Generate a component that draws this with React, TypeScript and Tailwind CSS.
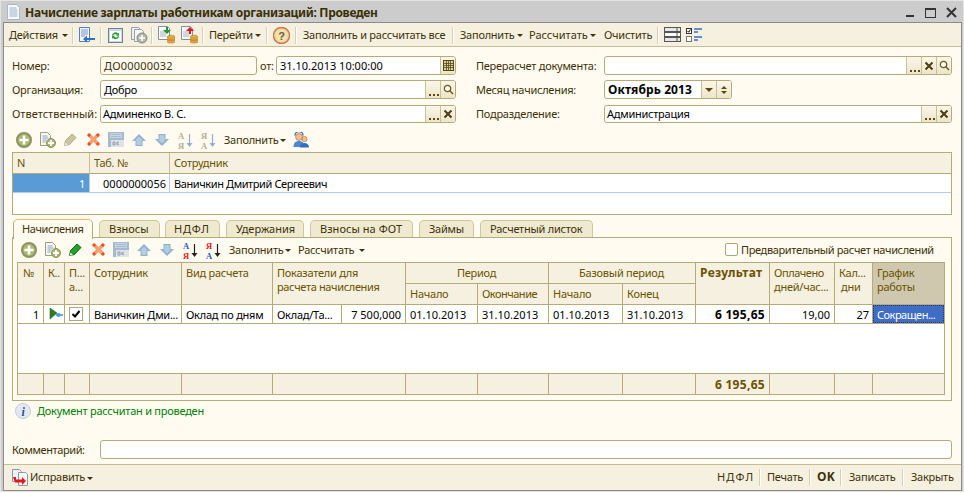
import React from "react";

const FONT = "font-['Liberation_Sans',sans-serif] text-[11px] leading-[13px] tracking-[-0.25px] text-[#3d3208]";
const HEAD = "text-[#6b5200]";
const NUM = "tracking-[0px] text-black";
const BOLD = "font-bold text-[12px] tracking-[0.3px]";

function T({ c, children }: { c: string; children: React.ReactNode }) {
  return <div className={"absolute whitespace-nowrap " + c}>{children}</div>;
}
function Box({ c, children }: { c: string; children?: React.ReactNode }) {
  return <div className={"absolute " + c}>{children}</div>;
}
function Caret({ c }: { c: string }) {
  return <div className={"absolute w-0 h-0 border-l-[3px] border-r-[3px] border-t-[3px] border-l-transparent border-r-transparent border-t-[#3d3208] " + c} />;
}
function Sep({ c }: { c: string }) {
  return <div className={"absolute w-[2px] border-l border-l-[#d8d0ae] border-r border-r-white " + c} />;
}
function Ellipsis() {
  return <div className="absolute left-[3px] bottom-[2px] flex gap-[2px]">
    <span className="w-[2px] h-[2px] bg-[#5a4a10]" /><span className="w-[2px] h-[2px] bg-[#5a4a10]" /><span className="w-[2px] h-[2px] bg-[#5a4a10]" />
  </div>;
}
function Btn({ c, children }: { c: string; children?: React.ReactNode }) {
  return <div className={"absolute top-0 bottom-0 w-[15px] border-l border-l-[#c9c09a] bg-gradient-to-b from-[#fbf7e8] to-[#ece5c9] flex items-center justify-center " + c}>{children}</div>;
}
function XI() {
  return <svg width="10" height="10" viewBox="0 0 10 10"><path d="M1.5 1.5l7 7M8.500 1.500l-7 7" stroke="#4a3c10" strokeWidth="2" /></svg>;
}
function Lens() {
  return <svg width="11" height="11" viewBox="0 0 11 11"><circle cx="4.500" cy="4.500" r="3.200" fill="#fff" stroke="#6a5a20" strokeWidth="1.200" /><path d="M7 7l3 3" stroke="#6a5a20" strokeWidth="1.600" /></svg>;
}

function Add({ c }: { c: string }) {
  return <svg className={"absolute " + c} width="16" height="16" viewBox="0 0 16 16"><circle cx="8" cy="8" r="7" fill="#a9bb72" stroke="#8f9260" strokeWidth="2" /><path d="M8 3.500v9M3.500 8h9" stroke="#fff" strokeWidth="2.600" /></svg>;
}
function AddDoc({ c }: { c: string }) {
  return <svg className={"absolute " + c} width="16" height="16" viewBox="0 0 16 16"><path d="M.5 .5h7l3 3v10H.5z" fill="#f8f8f0" stroke="#9a9a88" /><path d="M2.500 4h5M2.500 6h6M2.500 8h4M2.500 10h3" stroke="#8aa4c0" /><circle cx="11" cy="11" r="4.500" fill="#a9b672" stroke="#8f9260" /><path d="M11 8v6M8 11h6" stroke="#fff" strokeWidth="1.800" /></svg>;
}
function Pencil({ c, on }: { c: string; on?: boolean }) {
  return <svg className={"absolute " + c} width="13" height="13" viewBox="0 0 13 13"><path d="M.5 12.500L1.500 7.500 8 1l4 3.500-6.500 7z" fill={on ? "#25a02a" : "#c9c5a2"} stroke={on ? "#0d6a12" : "#b0ab86"} /><path d="M.5 12.500l1-3 2.500 2.500z" fill={on ? "#e8f5d8" : "#e8e6d8"} /></svg>;
}
function Del({ c }: { c: string }) {
  return <svg className={"absolute " + c} width="13" height="13" viewBox="0 0 13 13"><path d="M2 2l9 9M11 2l-9 9" stroke="#f5a070" strokeWidth="3.600" /><path d="M1 1l2 2M12 1l-2 2M1 12l2-2M12 12l-2-2" stroke="#ec4a28" strokeWidth="3" /></svg>;
}
function Save({ c }: { c: string }) {
  return <svg className={"absolute " + c} width="16" height="15" viewBox="0 0 16 15"><rect width="16" height="15" fill="#a3bacf" /><rect x="2" y="1" width="12" height="5" fill="#c6d5e2" /><path d="M3 2.500h10M3 4.500h10" stroke="#aabccc" /><rect x="3" y="8" width="13" height="7" fill="#dde3e6" /><path d="M5 10v3h2v-3zM9 10v3M9 11.500l2-1.500M9 11.500l2 1.500" stroke="#8ea0b0" fill="none" /></svg>;
}
function Up({ c }: { c: string }) {
  return <svg className={"absolute " + c} width="14" height="12" viewBox="0 0 14 12"><path d="M7 0l7 7h-3.500v5h-7V7H0z" fill="#8fb0d0" /><path d="M7 2.500L11 6.500H9.500v4.500h-5V6.500H3z" fill="#b4cce0" /></svg>;
}
function Down({ c }: { c: string }) {
  return <svg className={"absolute " + c} width="14" height="12" viewBox="0 0 14 12"><path d="M7 12L0 5h3.500V0h7v5H14z" fill="#8fb0d0" /><path d="M7 9.500L3 5.500h1.500V1h5v4.500H11z" fill="#b4cce0" /></svg>;
}
function Sort({ c, top, bottom, a, b, arrow }: { c: string; top: string; bottom: string; a: string; b: string; arrow: string }) {
  return <svg className={"absolute " + c} width="16" height="17" viewBox="0 0 16 17">
    <text x="0" y="6.500" fontSize="8.500" fontWeight="700" fontFamily="Liberation Serif, serif" fill={a}>{top}</text>
    <text x="0" y="16.500" fontSize="8.500" fontWeight="700" fontFamily="Liberation Serif, serif" fill={b}>{bottom}</text>
    <path d="M11.500 2v11" stroke={arrow} strokeWidth="1.200" /><path d="M8.500 11h6l-3 4z" fill={arrow} />
  </svg>;
}

export default function App() {
  return (
    <div className={"relative w-[964px] h-[493px] overflow-hidden bg-white " + FONT}>
      {/* window frame */}
      <Box c="left-0 top-0 w-[964px] h-[492px] bg-[#cccccc] border border-[#e4e4e4]" />
      <Box c="left-[3px] top-[22px] w-[959px] h-[469px] bg-[#fffbf0] border border-[#8a8a8a]" />

      {/* title */}
      <svg className="absolute left-[6px] top-[4px]" width="15" height="16" viewBox="0 0 15 16">
        <path d="M1.500 .5h9l3 3v12h-12z" fill="#f8fafc" stroke="#a8b8c8" />
        <path d="M3.500 4h7M3.500 6h8M3.500 8h8M3.500 10h8M3.500 12h8" stroke="#98b0d0" />
      </svg>
      <T c="left-[25px] top-[6px] font-bold text-[12px] tracking-[-0.32px] text-[#3a3000]">Начисление зарплаты работникам организаций: Проведен</T>
      <Box c="left-[906px] top-[15px] w-[8px] h-[2px] bg-[#333]" />
      <Box c="left-[925px] top-[8px] w-[11px] h-[10px] border border-[#333] border-t-2" />
      <svg className="absolute left-[946px] top-[7px]" width="11" height="11" viewBox="0 0 11 11"><path d="M1 1l9 9M10 1l-9 9" stroke="#333" strokeWidth="2" /></svg>

      {/* top toolbar */}
      <Box c="left-[4px] top-[23px] w-[957px] h-[24px] bg-[#f5f0df] border-b border-b-[#c6bd94]" />
      <T c="left-[9px] top-[28px]">Действия</T><Caret c="left-[62px] top-[34px]" />
      <Sep c="left-[72px] top-[27px] h-[17px]" />
      <svg className="absolute left-[78px] top-[27px]" width="18" height="17" viewBox="0 0 18 17"><path d="M1.500 .5h10v14h-10z" fill="#f4f7fb" stroke="#5580b8" /><path d="M3 3h7M3 5h7M3 7h7M3 9h4" stroke="#6f95c8" /><path d="M17 11H9V8.500L5 12l4 3.500V13h8z" fill="#2f6fc4" /></svg>
      <Sep c="left-[100px] top-[27px] h-[17px]" />
      <svg className="absolute left-[108px] top-[28px]" width="15" height="15" viewBox="0 0 15 15"><rect x=".5" y=".5" width="14" height="14" fill="#c8d8e4" stroke="#70808c" /><rect x="2" y="3" width="11" height="10" fill="#fff" /><path d="M4 7a3.500 3.500 0 016-1.500l1-.8v3H8l1-.8A2.400 2.400 0 005 8z" fill="#2f9a3a" /><path d="M11 8.500a3.500 3.500 0 01-6 1.500l-1 .8v-3h3l-1 .8a2.400 2.400 0 004-.6z" fill="#2f9a3a" /></svg>
      <svg className="absolute left-[131px] top-[27px]" width="17" height="17" viewBox="0 0 17 17"><path d="M.5 .5h7l2 2v10h-9z" fill="#eef0f2" stroke="#9aa0a6" /><path d="M3.500 2.500h7l2 2v10h-9z" fill="#f6f7f8" stroke="#9aa0a6" /><circle cx="11" cy="11" r="5" fill="#b4b8a8" stroke="#84887a" /><path d="M11 8v6M8 11h6" stroke="#fff" strokeWidth="1.600" /></svg>
      <Sep c="left-[151px] top-[27px] h-[17px]" />
      <svg className="absolute left-[158px] top-[26px]" width="18" height="18" viewBox="0 0 18 18"><path d="M.5 .5h9l2 2v11h-11z" fill="#f6f8fa" stroke="#8a9098" /><path d="M2 6h7M2 8h6M2 10h6" stroke="#a8b4c0" /><path d="M8 1v3H5l4 4 4-4h-3V1z" fill="#1d9a35" /><ellipse cx="13" cy="11" rx="4" ry="1.800" fill="#e8b04a" stroke="#a87828" strokeWidth=".6" /><path d="M9 11v5c0 1 2 1.600 4 1.600s4-.6 4-1.600v-5" fill="#dca040" /><path d="M9 13.500c1 1 7 1 8 0" stroke="#a87828" fill="none" strokeWidth=".6" /></svg>
      <svg className="absolute left-[181px] top-[26px]" width="18" height="18" viewBox="0 0 18 18"><path d="M.5 .5h9l2 2v11h-11z" fill="#f6f8fa" stroke="#8a9098" /><path d="M2 6h7M2 8h6M2 10h6" stroke="#a8b4c0" /><path d="M8 8V5H5l4-4 4 4h-3v3z" fill="#e01818" /><ellipse cx="13" cy="11" rx="4" ry="1.800" fill="#e8b04a" stroke="#a87828" strokeWidth=".6" /><path d="M9 11v5c0 1 2 1.600 4 1.600s4-.6 4-1.600v-5" fill="#dca040" /><path d="M9 13.500c1 1 7 1 8 0" stroke="#a87828" fill="none" strokeWidth=".6" /></svg>
      <Sep c="left-[202px] top-[27px] h-[17px]" />
      <T c="left-[209px] top-[28px]">Перейти</T><Caret c="left-[255px] top-[34px]" />
      <Sep c="left-[266px] top-[27px] h-[17px]" />
      <svg className="absolute left-[273px] top-[27px]" width="17" height="17" viewBox="0 0 17 17"><circle cx="8.500" cy="8.500" r="8" fill="#e8d8b8" stroke="#d07838" strokeWidth="1.400" /><circle cx="8.500" cy="8.500" r="5.500" fill="#f4e4a8" /><text x="8.500" y="12.500" textAnchor="middle" fontSize="11" fontWeight="700" fontFamily="Liberation Sans, sans-serif" fill="#6a5a40">?</text></svg>
      <Sep c="left-[295px] top-[27px] h-[17px]" />
      <T c="left-[303px] top-[28px]">Заполнить и рассчитать все</T>
      <Sep c="left-[452px] top-[27px] h-[17px]" />
      <T c="left-[460px] top-[28px]">Заполнить</T><Caret c="left-[517px] top-[34px]" />
      <T c="left-[529px] top-[28px] tracking-[0px]">Рассчитать</T><Caret c="left-[590px] top-[34px]" />
      <T c="left-[604px] top-[28px]">Очистить</T>
      <Sep c="left-[657px] top-[27px] h-[17px]" />
      <svg className="absolute left-[664px] top-[27px]" width="17" height="16" viewBox="0 0 17 16"><rect x=".5" y=".5" width="16" height="4" fill="#e8e8e8" stroke="#555" /><rect x=".5" y="5.500" width="16" height="4" fill="#fff" stroke="#555" /><rect x=".5" y="10.500" width="16" height="4" fill="#e8e8e8" stroke="#555" /><path d="M13 1v13" stroke="#555" /></svg>
      <svg className="absolute left-[686px] top-[27px]" width="18" height="16" viewBox="0 0 18 16"><rect x=".5" y="1.500" width="5" height="5" fill="#fff" stroke="#333" /><path d="M1.500 4l1.200 1.200L4.500 2.500" stroke="#000" fill="none" /><rect x=".5" y="9.500" width="5" height="5" fill="#fff" stroke="#777" /><path d="M8 2h8M8 5h4M8 10h8M8 13h4" stroke="#3a6cc8" strokeWidth="1.600" /></svg>

      {/* form left */}
      <T c="left-[12px] top-[59px]">Номер:</T>
      <Box c="left-[100px] top-[56px] w-[157px] h-[19px] rounded-[3px] border border-[#b5aa7a] bg-[#fffbf0]" />
      <T c="left-[104px] top-[59px] tracking-[0.2px]">ДО00000032</T>
      <T c="left-[260px] top-[59px]">от:</T>
      <Box c="left-[276px] top-[56px] w-[180px] h-[19px] rounded-[3px] border border-[#b5aa7a] bg-white overflow-hidden">
        <Btn c="right-0"><svg width="11" height="11" viewBox="0 0 11 11"><rect x=".5" y=".5" width="10" height="10" fill="#d8d0a8" stroke="#5a4a10" /><path d="M.5 3.500h10M.5 5.500h10M.5 7.500h10M3.500 1v10M5.500 1v10M7.500 1v10" stroke="#5a4a10" strokeWidth=".8" /></svg></Btn>
      </Box>
      <T c={"left-[280px] top-[59px] " + NUM}>31.10.2013 10:00:00</T>

      <T c="left-[12px] top-[83px]">Организация:</T>
      <Box c="left-[100px] top-[80px] w-[356px] h-[19px] rounded-[3px] border border-[#b5aa7a] bg-white overflow-hidden">
        <Btn c="right-[15px]"><Ellipsis /></Btn>
        <Btn c="right-0"><Lens /></Btn>
      </Box>
      <T c="left-[104px] top-[83px] text-black">Добро</T>

      <T c="left-[12px] top-[107px] tracking-[0px]">Ответственный:</T>
      <Box c="left-[100px] top-[105px] w-[356px] h-[18px] rounded-[3px] border border-[#b5aa7a] bg-white overflow-hidden">
        <Btn c="right-[15px]"><Ellipsis /></Btn>
        <Btn c="right-0"><XI /></Btn>
      </Box>
      <T c="left-[103px] top-[107px] text-black">Админенко В. С.</T>

      {/* form right */}
      <T c="left-[476px] top-[59px]">Перерасчет документа:</T>
      <Box c="left-[604px] top-[56px] w-[348px] h-[19px] rounded-[3px] border border-[#b5aa7a] bg-white overflow-hidden">
        <Btn c="right-[30px]"><Ellipsis /></Btn>
        <Btn c="right-[15px]"><XI /></Btn>
        <Btn c="right-0"><Lens /></Btn>
      </Box>
      <T c="left-[476px] top-[83px]">Месяц начисления:</T>
      <Box c="left-[604px] top-[80px] w-[128px] h-[19px] rounded-[3px] border border-[#b5aa7a] bg-white overflow-hidden">
        <Btn c="right-[15px]"><div className="w-0 h-0 border-l-[4px] border-r-[4px] border-t-[4px] border-l-transparent border-r-transparent border-t-[#5a4a10]" /></Btn>
        <Btn c="right-0"><div className="flex flex-col gap-[2px]"><div className="w-0 h-0 border-l-[3px] border-r-[3px] border-b-[3px] border-l-transparent border-r-transparent border-b-[#5a4a10]" /><div className="w-0 h-0 border-l-[3px] border-r-[3px] border-t-[3px] border-l-transparent border-r-transparent border-t-[#5a4a10]" /></div></Btn>
      </Box>
      <T c="left-[608px] top-[83px] text-black font-bold text-[12px] tracking-[0.1px]">Октябрь 2013</T>
      <T c="left-[476px] top-[107px]">Подразделение:</T>
      <Box c="left-[604px] top-[105px] w-[348px] h-[18px] rounded-[3px] border border-[#b5aa7a] bg-white overflow-hidden">
        <Btn c="right-[15px]"><Ellipsis /></Btn>
        <Btn c="right-0"><XI /></Btn>
      </Box>
      <T c="left-[607px] top-[107px] text-black">Администрация</T>

      {/* toolbar 1 */}
      <Add c="left-[16px] top-[132px]" />
      <AddDoc c="left-[40px] top-[132px]" />
      <Pencil c="left-[64px] top-[133px]" />
      <Del c="left-[87px] top-[133px]" />
      <Save c="left-[108px] top-[132px]" />
      <Up c="left-[132px] top-[134px]" />
      <Down c="left-[155px] top-[134px]" />
      <Sort c="left-[178px] top-[132px]" top="А" bottom="Я" a="#b4ae90" b="#b4ae90" arrow="#8fb0d0" />
      <Sort c="left-[201px] top-[132px]" top="Я" bottom="А" a="#b4ae90" b="#b4ae90" arrow="#8fb0d0" />
      <T c="left-[224px] top-[133px]">Заполнить</T><Caret c="left-[280px] top-[139px]" />
      <svg className="absolute left-[293px] top-[132px]" width="16" height="16" viewBox="0 0 16 16"><circle cx="6" cy="5" r="3.400" fill="#f0c090" stroke="#a06830" strokeWidth=".6" /><path d="M2 3.500a4 4 0 018 0" stroke="#3a6ab0" fill="none" strokeWidth="1.400" /><path d="M.5 15c0-4 2-6 5.500-6s5.500 2 5.500 6z" fill="#4a88d0" /><circle cx="11.500" cy="7" r="2.600" fill="#f0c090" stroke="#a06830" strokeWidth=".6" /><path d="M7 15.500c0-3 2-4.500 4.500-4.500S16 12.500 16 15.500z" fill="#2f6fc4" /></svg>

      {/* table 1 */}
      <Box c="left-[12px] top-[152px] w-[940px] h-[63px] border border-[#b5aa7a] bg-white" />
      <Box c="left-[13px] top-[153px] w-[938px] h-[21px] bg-[#f5f0df] border-b border-b-[#b5aa7a]" />
      <Box c="left-[89px] top-[153px] w-px h-[21px] bg-[#c6bd94]" />
      <Box c="left-[169px] top-[153px] w-px h-[21px] bg-[#c6bd94]" />
      <T c={"left-[17px] top-[156px] " + HEAD}>N</T>
      <T c={"left-[94px] top-[156px] " + HEAD}>Таб. №</T>
      <T c={"left-[174px] top-[156px] " + HEAD}>Сотрудник</T>
      <Box c="left-[13px] top-[174px] w-[76px] h-[18px] bg-[#5b9bd5]" />
      <Box c="left-[89px] top-[174px] w-px h-[18px] bg-[#b4cde6]" />
      <Box c="left-[169px] top-[174px] w-px h-[18px] bg-[#b4cde6]" />
      <Box c="left-[13px] top-[192px] w-[938px] h-px bg-[#b4cde6]" />
      <T c="left-[13px] top-[177px] w-[72px] text-right text-white">1</T>
      <T c={"left-[89px] top-[177px] w-[77px] text-right " + NUM}>0000000056</T>
      <T c="left-[174px] top-[177px] text-black tracking-[-0.4px]">Ваничкин Дмитрий Сергеевич</T>

      {/* tabs */}
      <Box c="left-[12px] top-[237px] w-[940px] h-[164px] border border-[#b5aa7a] bg-[#fffbf0]" />
      <Box c="left-[13px] top-[219px] w-[80px] h-[20px] rounded-t-[5px] border border-b-0 border-[#b5aa7a] border-t-[#e8c060] bg-[#fffbf0]" />
      <T c="left-[22px] top-[222px] tracking-[-0.4px]">Начисления</T>
      <Box c="left-[99px] top-[220px] w-[61px] h-[17px] rounded-t-[5px] border border-b-0 border-[#cfc69f] bg-[#efe9d0]" />
      <T c="left-[109px] top-[222px] tracking-[0px]">Взносы</T>
      <Box c="left-[165px] top-[220px] w-[55px] h-[17px] rounded-t-[5px] border border-b-0 border-[#cfc69f] bg-[#efe9d0]" />
      <T c="left-[174px] top-[222px] tracking-[0.8px]">НДФЛ</T>
      <Box c="left-[226px] top-[220px] w-[78px] h-[17px] rounded-t-[5px] border border-b-0 border-[#cfc69f] bg-[#efe9d0]" />
      <T c="left-[236px] top-[222px] tracking-[0px]">Удержания</T>
      <Box c="left-[310px] top-[220px] w-[103px] h-[17px] rounded-t-[5px] border border-b-0 border-[#cfc69f] bg-[#efe9d0]" />
      <T c="left-[320px] top-[222px] tracking-[0.05px]">Взносы на ФОТ</T>
      <Box c="left-[419px] top-[220px] w-[55px] h-[17px] rounded-t-[5px] border border-b-0 border-[#cfc69f] bg-[#efe9d0]" />
      <T c="left-[429px] top-[222px]">Займы</T>
      <Box c="left-[480px] top-[220px] w-[113px] h-[17px] rounded-t-[5px] border border-b-0 border-[#cfc69f] bg-[#efe9d0]" />
      <T c="left-[490px] top-[222px]">Расчетный листок</T>

      {/* toolbar 2 */}
      <Add c="left-[21px] top-[242px]" />
      <AddDoc c="left-[45px] top-[242px]" />
      <Pencil c="left-[69px] top-[243px]" on />
      <Del c="left-[92px] top-[243px]" />
      <Save c="left-[113px] top-[242px]" />
      <Up c="left-[137px] top-[244px]" />
      <Down c="left-[160px] top-[244px]" />
      <Sort c="left-[183px] top-[242px]" top="А" bottom="Я" a="#2a5ac0" b="#e01818" arrow="#222" />
      <Sort c="left-[206px] top-[242px]" top="Я" bottom="А" a="#e01818" b="#2a5ac0" arrow="#222" />
      <T c="left-[229px] top-[243px]">Заполнить</T><Caret c="left-[285px] top-[249px]" />
      <T c="left-[298px] top-[243px]">Рассчитать</T><Caret c="left-[359px] top-[249px]" />
      <Box c="left-[725px] top-[243px] w-[13px] h-[13px] rounded-[2px] border border-[#a8a878] bg-white" />
      <T c="left-[741px] top-[243px] tracking-[-0.36px]">Предварительный расчет начислений</T>

      {/* table 2 */}
      <Box c="left-[17px] top-[262px] w-[928px] h-[133px] border border-[#b5aa7a] bg-white" />
      <Box c="left-[18px] top-[263px] w-[926px] h-[42px] bg-[#f5f0df]" />
      <Box c="left-[18px] top-[374px] w-[926px] h-[20px] bg-[#f5f0df]" />
      <Box c="left-[873px] top-[263px] w-[71px] h-[42px] bg-[#cfc8ae]" />
      <Box c="left-[18px] top-[304px] w-[926px] h-px bg-[#b5aa7a]" />
      <Box c="left-[18px] top-[323px] w-[926px] h-px bg-[#b5aa7a]" />
      <Box c="left-[18px] top-[373px] w-[926px] h-px bg-[#b5aa7a]" />
      <Box c="left-[405px] top-[283px] w-[290px] h-px bg-[#b5aa7a]" />
      <Box c="left-[43px] top-[263px] w-px h-[61px] bg-[#b5aa7a]" /><Box c="left-[43px] top-[374px] w-px h-[20px] bg-[#b5aa7a]" />
      <Box c="left-[64px] top-[263px] w-px h-[61px] bg-[#b5aa7a]" /><Box c="left-[64px] top-[374px] w-px h-[20px] bg-[#b5aa7a]" />
      <Box c="left-[89px] top-[263px] w-px h-[61px] bg-[#b5aa7a]" /><Box c="left-[89px] top-[374px] w-px h-[20px] bg-[#b5aa7a]" />
      <Box c="left-[181px] top-[263px] w-px h-[61px] bg-[#b5aa7a]" /><Box c="left-[181px] top-[374px] w-px h-[20px] bg-[#b5aa7a]" />
      <Box c="left-[272px] top-[263px] w-px h-[61px] bg-[#b5aa7a]" /><Box c="left-[272px] top-[374px] w-px h-[20px] bg-[#b5aa7a]" />
      <Box c="left-[341px] top-[305px] w-px h-[18px] bg-[#b5aa7a]" />
      <Box c="left-[405px] top-[263px] w-px h-[61px] bg-[#b5aa7a]" /><Box c="left-[405px] top-[374px] w-px h-[20px] bg-[#b5aa7a]" />
      <Box c="left-[477px] top-[284px] w-px h-[40px] bg-[#b5aa7a]" /><Box c="left-[477px] top-[374px] w-px h-[20px] bg-[#b5aa7a]" />
      <Box c="left-[548px] top-[263px] w-px h-[61px] bg-[#b5aa7a]" /><Box c="left-[548px] top-[374px] w-px h-[20px] bg-[#b5aa7a]" />
      <Box c="left-[622px] top-[284px] w-px h-[40px] bg-[#b5aa7a]" /><Box c="left-[622px] top-[374px] w-px h-[20px] bg-[#b5aa7a]" />
      <Box c="left-[695px] top-[263px] w-px h-[61px] bg-[#b5aa7a]" /><Box c="left-[695px] top-[374px] w-px h-[20px] bg-[#b5aa7a]" />
      <Box c="left-[769px] top-[263px] w-px h-[61px] bg-[#b5aa7a]" /><Box c="left-[769px] top-[374px] w-px h-[20px] bg-[#b5aa7a]" />
      <Box c="left-[834px] top-[263px] w-px h-[61px] bg-[#b5aa7a]" /><Box c="left-[834px] top-[374px] w-px h-[20px] bg-[#b5aa7a]" />
      <Box c="left-[872px] top-[263px] w-px h-[61px] bg-[#b5aa7a]" /><Box c="left-[872px] top-[374px] w-px h-[20px] bg-[#b5aa7a]" />

      <T c={"left-[23px] top-[266px] " + HEAD}>№</T>
      <T c={"left-[48px] top-[266px] " + HEAD}>К..</T>
      <T c={"left-[69px] top-[266px] " + HEAD}>П...</T>
      <T c={"left-[69px] top-[280px] " + HEAD}>а...</T>
      <T c={"left-[94px] top-[266px] " + HEAD}>Сотрудник</T>
      <T c={"left-[186px] top-[266px] " + HEAD}>Вид расчета</T>
      <T c={"left-[277px] top-[266px] " + HEAD}>Показатели для</T>
      <T c={"left-[277px] top-[280px] tracking-[-0.35px] " + HEAD}>расчета начисления</T>
      <T c={"left-[405px] top-[266px] w-[143px] text-center " + HEAD}>Период</T>
      <T c={"left-[410px] top-[287px] " + HEAD}>Начало</T>
      <T c={"left-[482px] top-[287px] tracking-[-0.5px] " + HEAD}>Окончание</T>
      <T c={"left-[548px] top-[266px] w-[147px] text-center " + HEAD}>Базовый период</T>
      <T c={"left-[553px] top-[287px] " + HEAD}>Начало</T>
      <T c={"left-[627px] top-[287px] " + HEAD}>Конец</T>
      <T c={"left-[700px] top-[266px] " + BOLD + " " + HEAD}>Результат</T>
      <T c={"left-[774px] top-[266px] tracking-[-0.45px] " + HEAD}>Оплачено</T>
      <T c={"left-[774px] top-[280px] " + HEAD}>дней/час...</T>
      <T c={"left-[839px] top-[266px] " + HEAD}>Кал...</T>
      <T c={"left-[841px] top-[280px] " + HEAD}>дни</T>
      <T c={"left-[877px] top-[266px] " + HEAD}>График</T>
      <T c={"left-[877px] top-[280px] " + HEAD}>работы</T>

      <T c="left-[18px] top-[308px] w-[21px] text-right text-black">1</T>
      <svg className="absolute left-[49px] top-[307px]" width="15" height="13" viewBox="0 0 15 13"><path d="M1 1l7 5-7 6z" fill="#2e7d20" stroke="#1f5a12" strokeWidth=".5" /><path d="M7 8h7" stroke="#3a88d8" strokeWidth="1.400" /><circle cx="9.500" cy="8" r="2" fill="#4a98e8" /></svg>
      <Box c="left-[69px] top-[307px] w-[14px] h-[14px] border border-[#a8a878] bg-white flex items-center justify-center">
        <svg width="10" height="10" viewBox="0 0 10 10"><path d="M1.500 5l2.500 2.500L8.500 2" stroke="#000" strokeWidth="2" fill="none" /></svg>
      </Box>
      <T c="left-[94px] top-[308px] text-black">Ваничкин Дми...</T>
      <T c="left-[186px] top-[308px] text-black">Оклад по дням</T>
      <T c="left-[277px] top-[308px] text-black">Оклад/Та...</T>
      <T c={"left-[342px] top-[308px] w-[59px] text-right " + NUM}>7 500,000</T>
      <T c={"left-[410px] top-[308px] " + NUM}>01.10.2013</T>
      <T c={"left-[482px] top-[308px] " + NUM}>31.10.2013</T>
      <T c={"left-[553px] top-[308px] " + NUM}>01.10.2013</T>
      <T c={"left-[627px] top-[308px] " + NUM}>31.10.2013</T>
      <T c={"left-[696px] top-[308px] w-[69px] text-right text-black " + BOLD}>6 195,65</T>
      <T c={"left-[770px] top-[308px] w-[60px] text-right " + NUM}>19,00</T>
      <T c={"left-[835px] top-[308px] w-[34px] text-right " + NUM}>27</T>
      <Box c="left-[873px] top-[305px] w-[71px] h-[18px] bg-[#3f6cc4] border border-dotted border-[#1c3a78]" />
      <T c="left-[877px] top-[308px] tracking-[-0.5px] text-white">Сокращен...</T>
      <T c={"left-[696px] top-[378px] w-[69px] text-right " + BOLD + " " + HEAD}>6 195,65</T>

      {/* message */}
      <svg className="absolute left-[15px] top-[403px]" width="16" height="16" viewBox="0 0 16 16"><circle cx="8" cy="8" r="7.500" fill="#e4e8f0" stroke="#c8ccd4" /><text x="8" y="13" textAnchor="middle" fontSize="12" fontStyle="italic" fontWeight="700" fontFamily="Liberation Serif, serif" fill="#1f4fb0">i</text></svg>
      <T c="left-[37px] top-[404px] text-[#008000]">Документ рассчитан и проведен</T>

      {/* comment */}
      <T c="left-[12px] top-[443px] tracking-[-0.4px]">Комментарий:</T>
      <Box c="left-[100px] top-[440px] w-[852px] h-[19px] rounded-[3px] border border-[#b5aa7a] bg-white" />

      {/* bottom bar */}
      <Box c="left-[4px] top-[464px] w-[957px] h-[26px] bg-[#f5f0df] border-t border-t-[#c6bd94]" />
      <svg className="absolute left-[12px] top-[469px]" width="17" height="17" viewBox="0 0 17 17"><path d="M.5 .5h7l2 2v10h-9z" fill="#eef2f6" stroke="#8a98a8" /><path d="M6.500 3.500h7l2 2v11h-9z" fill="#f6f8fa" stroke="#8a98a8" /><path d="M1 8h3v2.500h6V8l4 4-4 4v-2.500H3z" fill="#e01818" /></svg>
      <T c="left-[30px] top-[470px]">Исправить</T><Caret c="left-[87px] top-[477px]" />
      <T c="left-[717px] top-[470px] tracking-[1.2px]">НДФЛ</T>
      <Sep c="left-[759px] top-[469px] h-[17px]" />
      <T c="left-[767px] top-[470px]">Печать</T>
      <Sep c="left-[809px] top-[469px] h-[17px]" />
      <T c={"left-[817px] top-[470px] " + BOLD}>OK</T>
      <Sep c="left-[840px] top-[469px] h-[17px]" />
      <T c="left-[849px] top-[470px]">Записать</T>
      <Sep c="left-[902px] top-[469px] h-[17px]" />
      <T c="left-[911px] top-[470px]">Закрыть</T>
    </div>
  );
}
